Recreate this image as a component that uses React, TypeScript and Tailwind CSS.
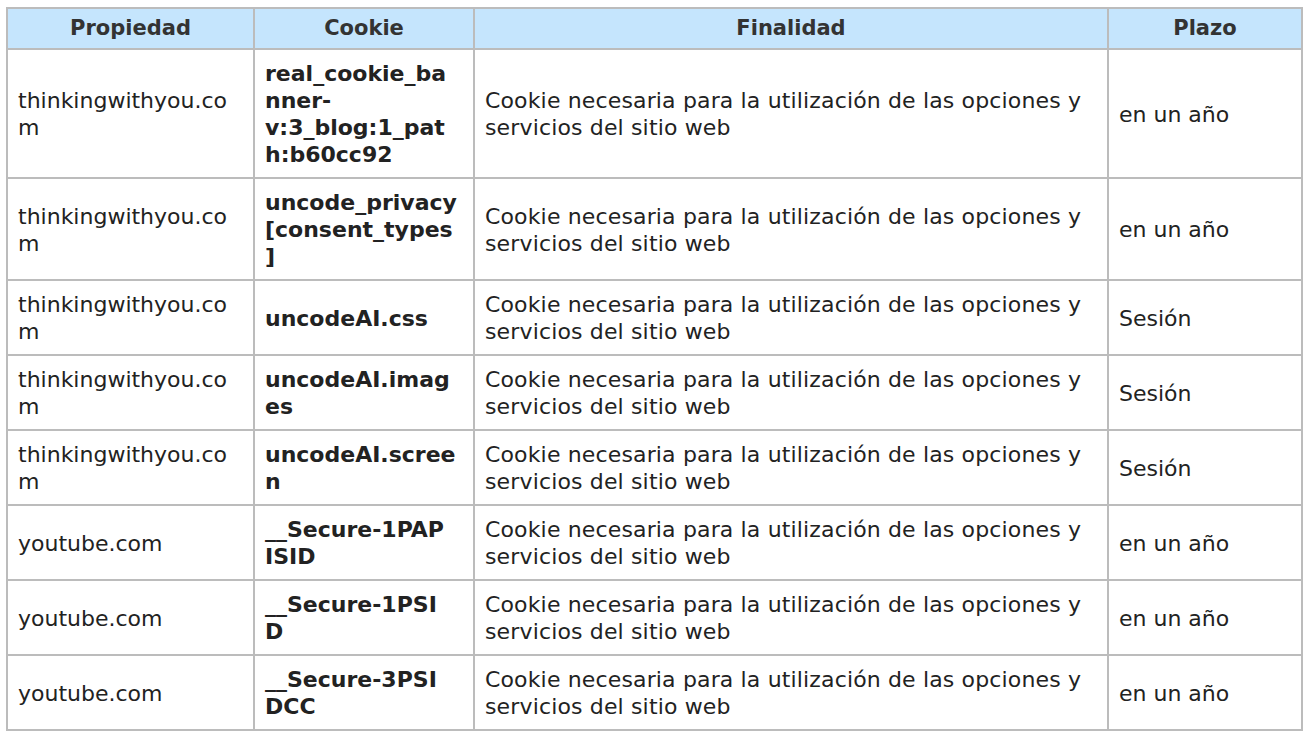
const rows = [
  { prop: "thinkingwithyou.com", cookie: ["real_cookie_ba", "nner-", "v:3_blog:1_pat", "h:b60cc92"], plazo: "en un año" },
  { prop: "thinkingwithyou.com", cookie: ["uncode_privacy", "[consent_types", "]"], plazo: "en un año" },
  { prop: "thinkingwithyou.com", cookie: ["uncodeAI.css"], plazo: "Sesión" },
  { prop: "thinkingwithyou.com", cookie: ["uncodeAI.imag", "es"], plazo: "Sesión" },
  { prop: "thinkingwithyou.com", cookie: ["uncodeAI.scree", "n"], plazo: "Sesión" },
  { prop: "youtube.com", cookie: ["__Secure-1PAP", "ISID"], plazo: "en un año" },
  { prop: "youtube.com", cookie: ["__Secure-1PSI", "D"], plazo: "en un año" },
  { prop: "youtube.com", cookie: ["__Secure-3PSI", "DCC"], plazo: "en un año" },
];

const finalidad = "Cookie necesaria para la utilización de las opciones y servicios del sitio web";

export default function App() {
  return (
    <div className="min-h-screen bg-white px-[6px] pt-[7px] font-['Verdana','DejaVu_Sans',sans-serif] text-[22px] leading-[27px] text-[#222]">
      <table className="w-[1295px] table-fixed border-collapse">
        <colgroup>
          <col className="w-[247px]" />
          <col className="w-[220px]" />
          <col className="w-[634px]" />
          <col className="w-[194px]" />
        </colgroup>
        <thead>
          <tr className="bg-[#c5e5fd] text-[21px] font-bold text-[#333]">
            {["Propiedad", "Cookie", "Finalidad", "Plazo"].map((h) => (
              <th key={h} className="border-2 border-[#bcbcbc] px-[10px] py-[6px] text-center">
                {h}
              </th>
            ))}
          </tr>
        </thead>
        <tbody>
          {rows.map((r, i) => (
            <tr key={i}>
              <td className="border-2 border-[#bcbcbc] pt-[10px] pb-[9px] pl-[10px] pr-[12px] align-middle [overflow-wrap:anywhere]">
                {r.prop}
              </td>
              <td className="border-2 border-[#bcbcbc] pt-[10px] pb-[9px] pl-[10px] pr-[10px] align-middle font-bold whitespace-nowrap">
                {r.cookie.map((line, j) => (
                  <div key={j}>{line}</div>
                ))}
              </td>
              <td className="border-2 border-[#bcbcbc] pt-[10px] pb-[9px] pl-[10px] pr-[12px] align-middle tracking-[0.15px]">
                {finalidad}
              </td>
              <td className="border-2 border-[#bcbcbc] pt-[10px] pb-[9px] pl-[10px] pr-[12px] align-middle">{r.plazo}</td>
            </tr>
          ))}
        </tbody>
      </table>
    </div>
  );
}
